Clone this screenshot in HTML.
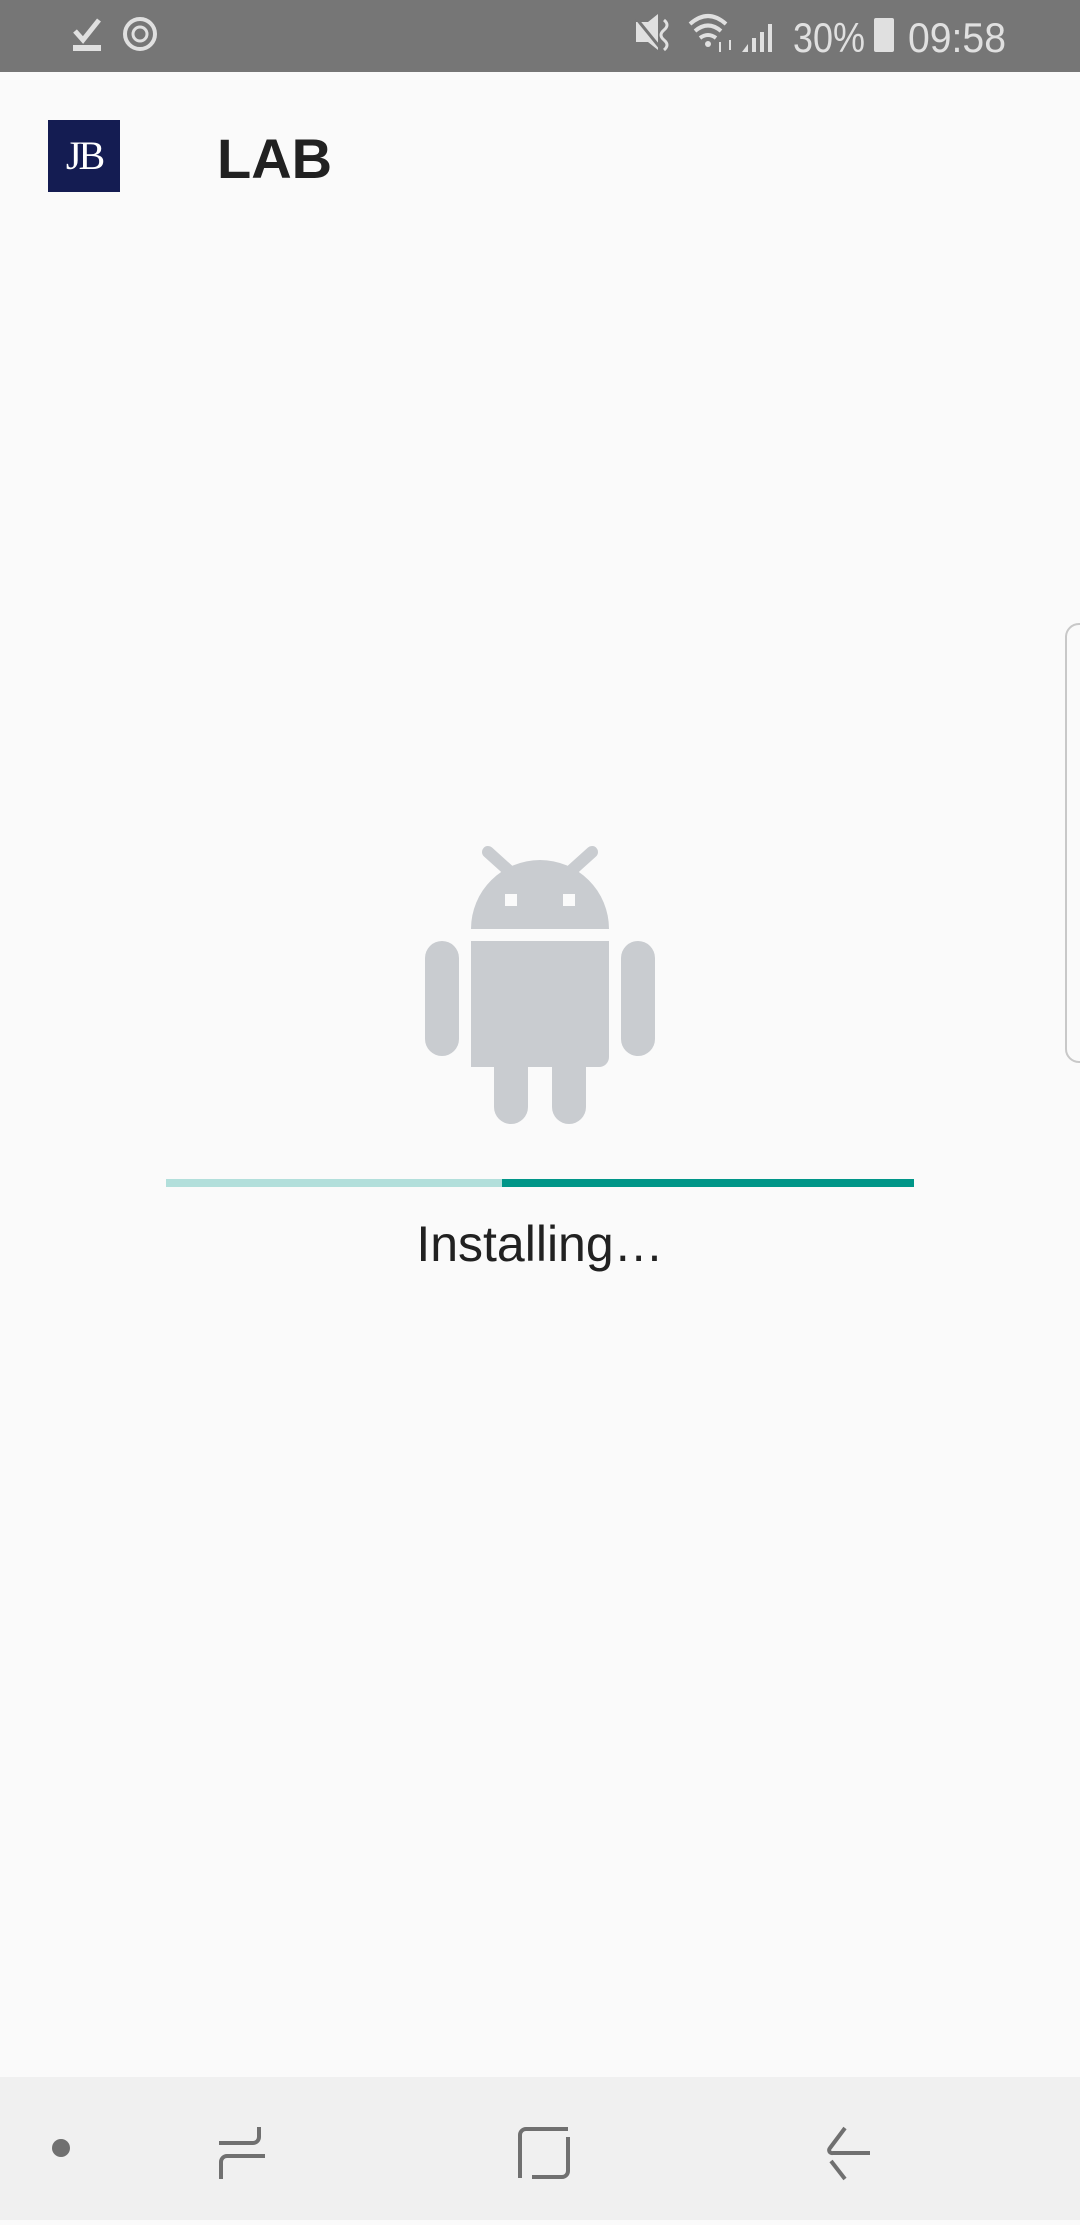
<!DOCTYPE html>
<html><head><meta charset="utf-8"><style>
*{margin:0;padding:0;box-sizing:border-box}
body{width:1080px;height:2220px;background:#fafafa;position:relative;overflow:hidden;font-family:"Liberation Sans",sans-serif}
.sb{position:absolute;left:0;top:0;width:1080px;height:72px;background:#767676}
.nav{position:absolute;left:0;top:2077px;width:1080px;height:143px;background:#f0f0f0}
</style></head><body>
<div class="sb">
<svg width="1080" height="72" style="position:absolute;left:0;top:0">
<g fill="#e0e0e0" stroke="#e0e0e0">
<path d="M75 31 l8 9 l16 -20" fill="none" stroke-width="5"/>
<rect x="73" y="45" width="28" height="6" stroke="none"/>
<circle cx="140" cy="34" r="15" fill="none" stroke-width="4"/>
<circle cx="140" cy="34" r="7" fill="none" stroke-width="3"/>
<path d="M636 22 l12 0 l10 -8 v36 l-10 -8 h-12z" stroke="none"/>
<path d="M636 18 l26 32" stroke="#767676" stroke-width="3"/>
<path d="M664 20 q6 5 0 10 q-6 5 0 10 q6 5 0 10" fill="none" stroke-width="3"/>
<path d="M690 24 q18 -16 36 0 M695 31 q13 -11 26 0 M700 38 q8 -6 16 0" fill="none" stroke-width="4"/>
<circle cx="708" cy="44" r="3" stroke="none"/>
<path d="M720 42 v10 M730 50 v-10" stroke-width="2"/>
<path d="M742 52 l6 -8 v8z M752 52 v-14 h4 v14z M760 52 v-20 h4 v20z M768 52 v-28 h4 v28z" stroke="none"/>
<rect x="874" y="18" width="20" height="34" rx="2" stroke="none"/>
</g>
<text x="793" y="52" fill="#e0e0e0" font-size="42" font-family="Liberation Sans Narrow,Liberation Sans,sans-serif" textLength="72" lengthAdjust="spacingAndGlyphs">30%</text>
<text x="908" y="52" fill="#e0e0e0" font-size="42" font-family="Liberation Sans Narrow,Liberation Sans,sans-serif" textLength="98" lengthAdjust="spacingAndGlyphs">09:58</text>
</svg>
</div>
<div style="position:absolute;left:48px;top:120px;width:72px;height:72px;background:#141c52;color:#fff;font-family:'Liberation Serif',serif;font-size:40px;line-height:72px;text-align:center;letter-spacing:-3px">JB</div>
<div style="position:absolute;left:217px;top:124px;font-size:56px;font-weight:bold;color:#212121;line-height:70px">LAB</div>
<svg width="1080" height="1300" style="position:absolute;left:0;top:4px">
<g fill="#c9ccd0">
<path d="M471 925 a69 69 0 0 1 138 0z"/>
<path d="M488 848 l20 18 M592 848 l-20 18" stroke="#c9ccd0" stroke-width="12" stroke-linecap="round"/>
<path d="M471 937 h138 v116 a10 10 0 0 1 -10 10 h-128 z"/>
<rect x="425" y="937" width="34" height="115" rx="17"/>
<rect x="621" y="937" width="34" height="115" rx="17"/>
<rect x="494" y="1040" width="34" height="80" rx="17"/>
<rect x="552" y="1040" width="34" height="80" rx="17"/>
</g>
<rect x="505" y="890" width="12" height="12" fill="#fafafa"/>
<rect x="563" y="890" width="12" height="12" fill="#fafafa"/>
<rect x="166" y="1175" width="336" height="8" fill="#b2dfdb"/>
<rect x="502" y="1175" width="412" height="8" fill="#009688"/>
</svg>
<div style="position:absolute;left:0;width:1080px;top:1212px;text-align:center;font-size:50px;color:#212121;line-height:64px">Installing…</div>
<div style="position:absolute;left:1065px;top:623px;width:30px;height:440px;border:2px solid #c8c8c8;border-radius:14px"></div>
<div class="nav">
<svg width="1080" height="143">
<circle cx="61" cy="71" r="9" fill="#707070"/>
<g fill="none" stroke="#707070" stroke-width="4" transform="translate(0,4)">
<path d="M219 62 h34 a6 6 0 0 0 6 -6 v-10"/>
<path d="M221 98 v-17 a6 6 0 0 1 6 -6 h38"/>
<path d="M568 48 h-42 a6 6 0 0 0 -6 6 v43"/>
<path d="M532 96 h30 a6 6 0 0 0 6 -6 v-34"/>
<path d="M845 47 l-15 20 a3 3 0 0 0 3 5 h37"/>
<path d="M831 80 l14 18"/>
</g>
</svg>
</div>
</body></html>
